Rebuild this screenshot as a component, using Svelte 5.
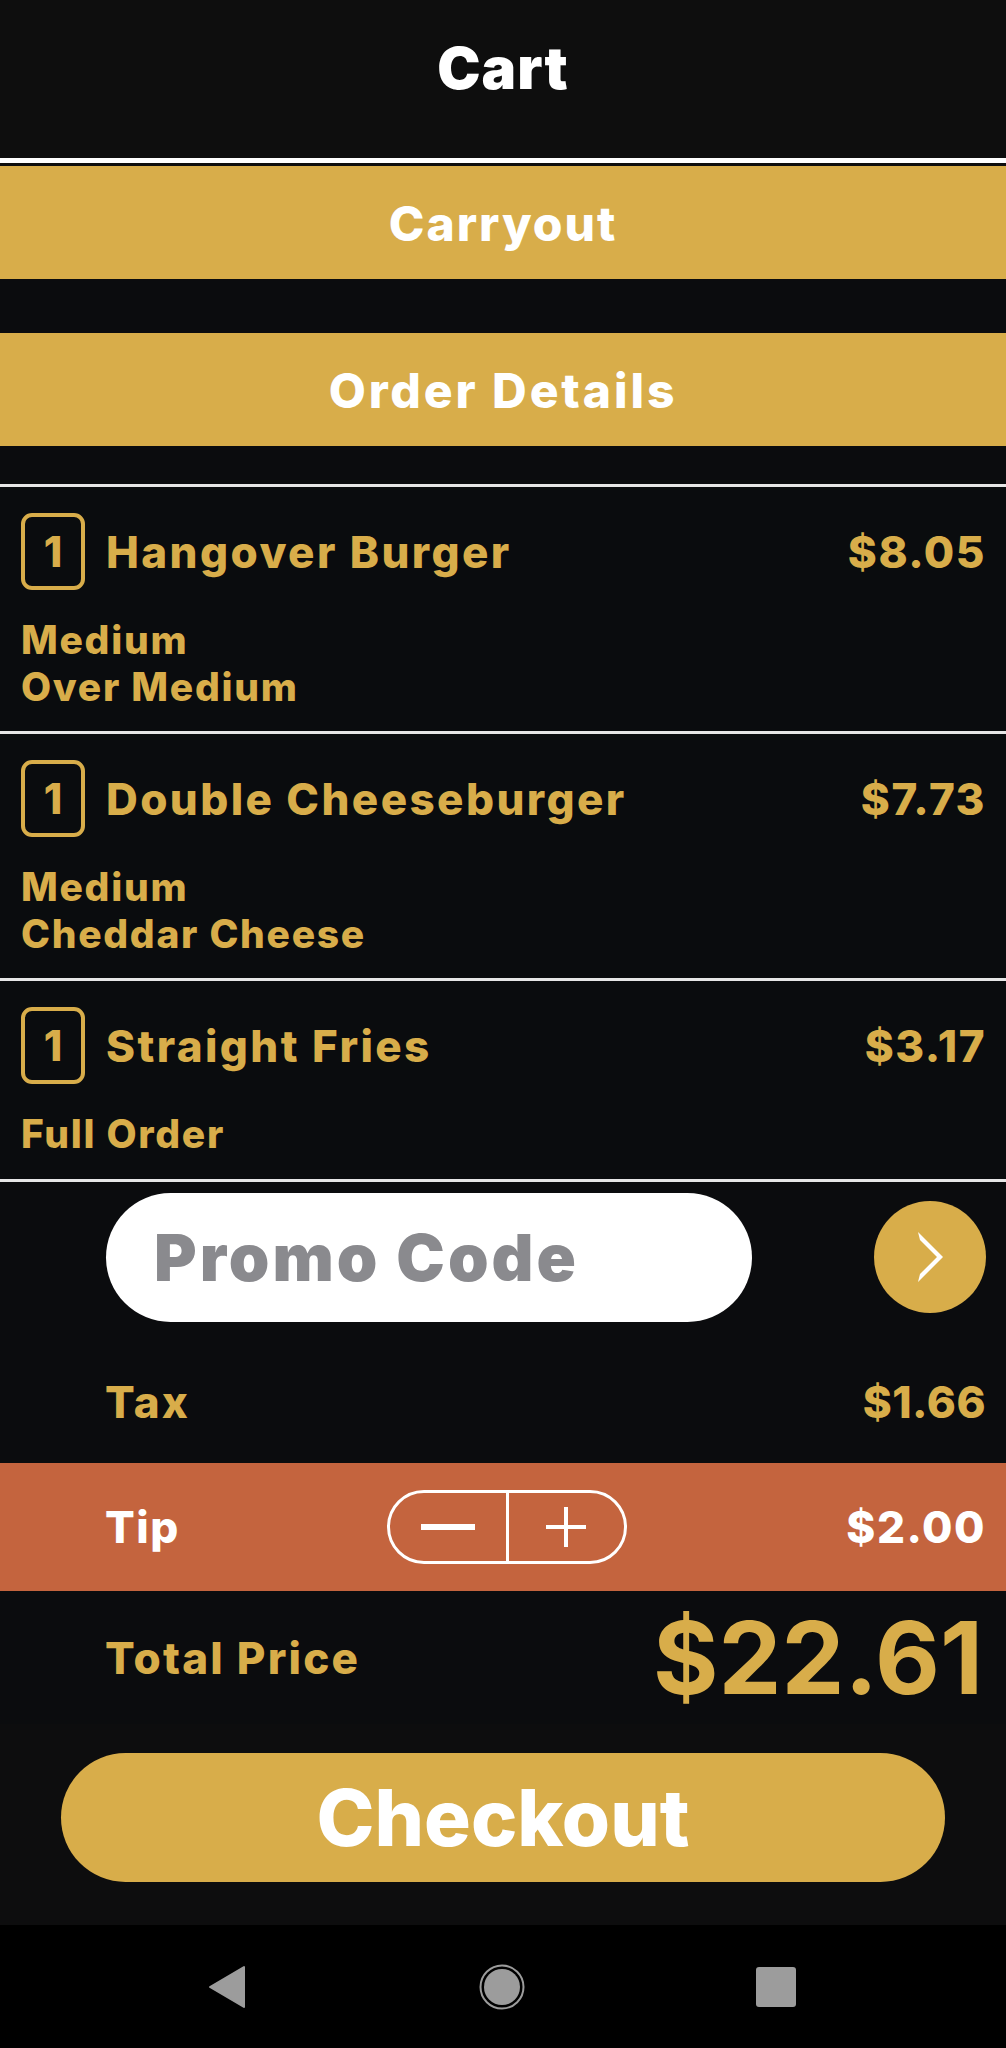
<script>
  const items = [
    { name: "Hangover Burger", price: "$8.05", mods: ["Medium", "Over Medium"] },
    { name: "Double Cheeseburger", price: "$7.73", mods: ["Medium", "Cheddar Cheese"] },
    { name: "Straight Fries", price: "$3.17", mods: ["Full Order"] },
  ];
</script>

<div class="screen">
  <header class="title">Cart</header>
  <div class="top-rule"></div>
  <div class="band carryout">Carryout</div>
  <div class="band details">Order Details</div>

  <div class="list">
    {#each items as item}
      <div class="item">
        <div class="item-row">
          <span class="qty">1</span>
          <span class="name">{item.name}</span>
          <span class="price">{item.price}</span>
        </div>
        <div class="mods">
          {#each item.mods as mod}
            <div>{mod}</div>
          {/each}
        </div>
      </div>
    {/each}
  </div>

  <div class="promo">
    <div class="promo-input">Promo Code</div>
    <button class="go" aria-label="Apply promo code">
      <svg viewBox="0 0 26 50" width="26" height="50">
        <path d="M1 0 L26 25 L1 50 L3 42 L20 25 L3 8 Z" fill="#fff" />
      </svg>
    </button>
  </div>

  <div class="line tax">
    <span>Tax</span>
    <span class="tax-value">$1.66</span>
  </div>

  <div class="line tip">
    <span>Tip</span>
    <div class="stepper">
      <button aria-label="Decrease tip"><span class="minus"></span></button>
      <button aria-label="Increase tip"><span class="plus"></span></button>
    </div>
    <span class="tip-value">$2.00</span>
  </div>

  <div class="line total">
    <span>Total Price</span>
    <span class="total-value">$22.61</span>
  </div>

  <div class="checkout-wrap">
    <button class="checkout">Checkout</button>
  </div>

  <nav class="navbar">
    <svg viewBox="0 0 40 44" width="40" height="44">
      <path d="M36 2 L36 42 L2 22 Z" fill="#9c9c9c" stroke="#9c9c9c" stroke-width="2" stroke-linejoin="round" />
    </svg>
    <svg viewBox="0 0 46 46" width="46" height="46">
      <circle cx="23" cy="23" r="21.5" fill="none" stroke="#9c9c9c" stroke-width="2" />
      <circle cx="23" cy="23" r="18" fill="#9c9c9c" />
    </svg>
    <span class="square"></span>
  </nav>
</div>

<style>
  :global(body) {
    background: #0c0c0c;
  }

  .screen {
    width: 1006px;
    height: 2048px;
    overflow: hidden;
    background: #0b0c0e;
    font-family: Inter, "Liberation Sans", sans-serif;
    font-weight: 800;
    color: #d8ad4a;
  }

  button {
    font: inherit;
    letter-spacing: inherit;
    border: 0;
    padding: 0;
    background: none;
    color: inherit;
  }

  .title {
    height: 158px;
    padding-top: 36px;
    box-sizing: border-box;
    background: #0e0e0e;
    color: #fff;
    text-align: center;
    font-size: 58px;
    font-weight: 900;
    letter-spacing: 1px;
    line-height: 64px;
  }

  .top-rule {
    height: 5px;
    background: #fff;
    border-bottom: 3px solid #0e0e0e;
  }

  .band {
    height: 113px;
    background: #d8ad4a;
    color: #fff;
    display: flex;
    align-items: center;
    justify-content: center;
    padding-top: 2px;
    box-sizing: border-box;
    font-size: 48px;
    letter-spacing: 2px;
  }

  .details {
    margin-top: 54px;
    letter-spacing: 2.9px;
  }

  .list {
    margin-top: 38px;
    border-top: 3px solid #e6e6e6;
    background: #0a0c0e;
  }

  .item {
    height: 247px;
    padding: 26px 20px 0 21px;
    box-sizing: border-box;
    border-bottom: 3px solid #e6e6e6;
  }

  .item:last-child {
    height: 201px;
  }

  .item-row {
    display: flex;
    align-items: center;
  }

  .qty {
    width: 64px;
    height: 77px;
    box-sizing: border-box;
    border: 4px solid #d8ad4a;
    border-radius: 11px;
    display: flex;
    align-items: center;
    justify-content: center;
    font-size: 42px;
    margin-right: 21px;
  }

  .name {
    flex: 1;
    font-size: 44px;
    letter-spacing: 2.4px;
  }

  .price {
    font-size: 44px;
    letter-spacing: 1.5px;
  }

  .mods {
    margin-top: 26px;
    font-size: 39px;
    line-height: 47px;
    letter-spacing: 1.7px;
  }

  .promo {
    display: flex;
    align-items: center;
    height: 150px;
    padding: 0 20px 0 106px;
  }

  .promo-input {
    width: 646px;
    height: 129px;
    box-sizing: border-box;
    padding-left: 48px;
    border-radius: 65px;
    background: #fff;
    color: #8a8a8e;
    display: flex;
    align-items: center;
    font-size: 65px;
    font-weight: 900;
    letter-spacing: 3px;
  }

  .go {
    width: 112px;
    height: 112px;
    margin-left: auto;
    border-radius: 50%;
    background: #d8ad4a;
    display: flex;
    align-items: center;
    justify-content: center;
  }

  .line {
    display: flex;
    align-items: center;
    justify-content: space-between;
    padding: 0 20px 0 105px;
    font-size: 44px;
    letter-spacing: 2.2px;
  }

  .tax {
    height: 131px;
    padding-top: 8px;
    box-sizing: border-box;
  }

  .tax-value {
    letter-spacing: 0.5px;
  }

  .tip {
    display: grid;
    grid-template-columns: 282px 240px 1fr;
    height: 128px;
    background: #c4643e;
    color: #fff;
    letter-spacing: 1.5px;
  }

  .tip-value {
    text-align: right;
  }

  .stepper {
    display: flex;
    height: 74px;
    box-sizing: border-box;
    border: 3px solid #fff;
    border-radius: 37px;
  }

  .stepper button {
    flex: 1;
    display: flex;
    align-items: center;
    justify-content: center;
  }

  .stepper button + button {
    border-left: 3px solid #fff;
  }

  .minus {
    width: 54px;
    height: 6px;
    background: #fff;
  }

  .plus {
    width: 40px;
    height: 40px;
    background:
      linear-gradient(#fff, #fff) center / 100% 4px no-repeat,
      linear-gradient(#fff, #fff) center / 4px 100% no-repeat;
  }

  .total {
    height: 133px;
  }

  .total-value {
    font-size: 100px;
    font-weight: 700;
    line-height: 1;
    letter-spacing: 0;
    margin-right: 3px;
  }

  .checkout-wrap {
    height: 201px;
    padding: 29px 61px 0;
    box-sizing: border-box;
    background: #0d0d0e;
  }

  .checkout {
    width: 884px;
    height: 129px;
    border-radius: 65px;
    background: #d8ad4a;
    color: #fff;
    font-size: 78px;
    font-weight: 800;
  }

  .navbar {
    height: 124px;
    background: #000;
    display: flex;
    align-items: center;
    justify-content: space-between;
    padding: 0 210px 0 208px;
  }

  .square {
    width: 40px;
    height: 40px;
    border-radius: 3px;
    background: #9c9c9c;
  }
</style>
